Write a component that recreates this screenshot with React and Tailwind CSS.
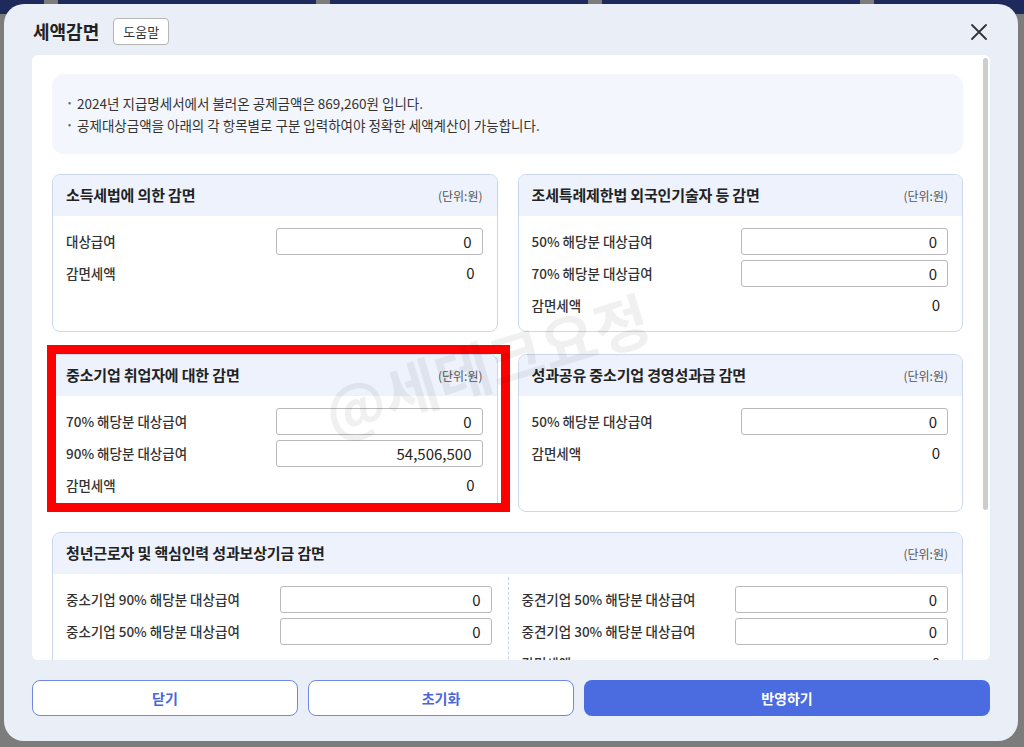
import React from 'react';

const font = "font-['Noto_Sans_CJK_KR','Noto_Sans',sans-serif]";

const AmountInput = ({ value, className = 'w-[207px]' }) => (
  <input
    type="text"
    readOnly
    value={value}
    className={`${className} h-[27px] shrink-0 rounded-[3px] border border-[#b9b9b9] bg-white pr-[10px] text-right text-[15px] text-[#222] outline-none`}
  />
);

const Row = ({ label, value, input = true, inputClass }) => (
  <div className="flex h-[27px] items-center">
    <span className="flex-1 text-[13.5px] font-medium text-[#333]">{label}</span>
    {input ? (
      <AmountInput value={value} className={inputClass} />
    ) : (
      <span className="pr-[8px] text-[15px] text-[#222]">{value}</span>
    )}
  </div>
);

const Card = ({ title, children, unit = true }) => (
  <div className="flex flex-col overflow-hidden rounded-[8px] border border-[#cbd7ee] bg-white">
    <div className="flex h-[41px] shrink-0 items-center justify-between bg-[#edf2fc] pl-[13px] pr-[14px]">
      <span className="text-[15px] font-semibold tracking-[-0.01em] text-[#222]">{title}</span>
      {unit && <span className="text-[12px] text-[#555]">(단위:원)</span>}
    </div>
    <div className="flex flex-1 flex-col gap-[5px] pb-[12px] pl-[13px] pr-[14px] pt-[12px]">{children}</div>
  </div>
);

export default function App() {
  return (
    <div className={`relative h-[747px] w-[1024px] overflow-hidden bg-[#7c7c7c] ${font}`}>
      {/* dimmed page behind the dialog */}
      <div className="flex h-[14px] bg-[#1f2a5c]">
        <div className="ml-[44px] w-[14px] bg-[#7c7c7c]" />
        <div className="ml-[258px] w-[14px] bg-[#7c7c7c]" />
        <div className="ml-[258px] w-[14px] bg-[#7c7c7c]" />
        <div className="ml-[258px] w-[14px] bg-[#7c7c7c]" />
      </div>

      {/* dialog */}
      <div className="absolute left-[4px] top-[4px] flex h-[737px] w-[1014px] flex-col rounded-[20px] bg-[#e9eef7]">
        <div className="flex h-[51px] shrink-0 items-center pl-[29px] pr-[27px] pt-[4px]">
          <h1 className="text-[18px] font-bold text-[#222]">세액감면</h1>
          <button className="ml-[14px] h-[27px] w-[56px] rounded-[4px] border border-[#b5b5b5] bg-white text-[13px] text-[#333]">
            도움말
          </button>
          <button className="ml-auto flex h-[24px] w-[24px] items-center justify-center">
            <svg width="18" height="18" viewBox="0 0 18 18" fill="none" stroke="#333" strokeWidth="1.8" strokeLinecap="round">
              <path d="M2 2L16 16M16 2L2 16" />
            </svg>
          </button>
        </div>

        <div className="relative mx-[28px] h-[605px] shrink-0 overflow-hidden rounded-[6px] bg-white">
          <div className="pl-[20px] pr-[27px] pt-[19px]">
            <div className="flex h-[80px] flex-col justify-center gap-[2px] rounded-[12px] bg-[#f3f6fc] px-[16px] text-[13.5px] text-[#333]">
              <p className="flex items-center gap-[6px]"><span className="text-[9px] text-[#666]">•</span>2024년 지급명세서에서 불러온 공제금액은 869,260원 입니다.</p>
              <p className="flex items-center gap-[6px]"><span className="text-[9px] text-[#666]">•</span>공제대상금액을 아래의 각 항목별로 구분 입력하여야 정확한 세액계산이 가능합니다.</p>
            </div>

            <div className="mt-[20px] grid grid-cols-2 gap-x-[20px] gap-y-[22px]">
              <Card title="소득세법에 의한 감면">
                <Row label="대상급여" value="0" />
                <Row label="감면세액" value="0" input={false} />
              </Card>
              <Card title="조세특례제한법 외국인기술자 등 감면">
                <Row label="50% 해당분 대상급여" value="0" />
                <Row label="70% 해당분 대상급여" value="0" />
                <Row label="감면세액" value="0" input={false} />
              </Card>
              <div className="relative flex flex-col">
                <Card title="중소기업 취업자에 대한 감면">
                  <Row label="70% 해당분 대상급여" value="0" />
                  <Row label="90% 해당분 대상급여" value="54,506,500" />
                  <Row label="감면세액" value="0" input={false} />
                </Card>
                {/* highlight box */}
                <div className="pointer-events-none absolute -left-[5px] -right-[12px] -top-[9px] bottom-0 border-[9px] border-[#ff0000]" />
              </div>
              <Card title="성과공유 중소기업 경영성과급 감면">
                <Row label="50% 해당분 대상급여" value="0" />
                <Row label="감면세액" value="0" input={false} />
              </Card>
            </div>

            <div className="mt-[20px] overflow-hidden rounded-[8px] border border-[#cbd7ee] bg-white">
              <div className="flex h-[41px] items-center justify-between bg-[#edf2fc] pl-[13px] pr-[14px]">
                <span className="text-[15px] font-semibold tracking-[-0.01em] text-[#222]">청년근로자 및 핵심인력 성과보상기금 감면</span>
                <span className="text-[12px] text-[#555]">(단위:원)</span>
              </div>
              <div className="grid grid-cols-2">
                <div className="flex flex-col gap-[5px] pb-[12px] pl-[13px] pr-[16px] pt-[12px]">
                  <Row label="중소기업 90% 해당분 대상급여" value="0" inputClass="w-[212px]" />
                  <Row label="중소기업 50% 해당분 대상급여" value="0" inputClass="w-[212px]" />
                </div>
                <div className="mt-[3px] flex flex-col gap-[5px] border-l border-dashed border-[#c5d1ea] pb-[12px] pl-[13px] pr-[14px] pt-[9px]">
                  <Row label="중견기업 50% 해당분 대상급여" value="0" inputClass="w-[213px]" />
                  <Row label="중견기업 30% 해당분 대상급여" value="0" inputClass="w-[213px]" />
                  <Row label="감면세액" value="0" input={false} />
                </div>
              </div>
            </div>
          </div>

          {/* scrollbar thumb */}
          <div className="absolute right-[2px] top-[3px] h-[452px] w-[5px] rounded-full bg-[#cdcdcd]" />
        </div>

        <div className="mx-[28px] mt-[20px] grid grid-cols-[266px_266px_1fr] gap-x-[10px]">
          <button className="h-[36px] rounded-[8px] border border-[#7087e6] bg-white text-[14px] font-semibold text-[#4a66dc]">닫기</button>
          <button className="h-[36px] rounded-[8px] border border-[#7087e6] bg-white text-[14px] font-semibold text-[#4a66dc]">초기화</button>
          <button className="h-[36px] rounded-[8px] bg-[#4b6be1] text-[14px] font-bold text-white">반영하기</button>
        </div>
      </div>

      {/* watermark */}
      <div className="pointer-events-none absolute left-[318px] top-[318px] -rotate-[17deg] whitespace-nowrap text-[60px] font-bold text-black/[0.06]">
        @세테크요정
      </div>
    </div>
  );
}
